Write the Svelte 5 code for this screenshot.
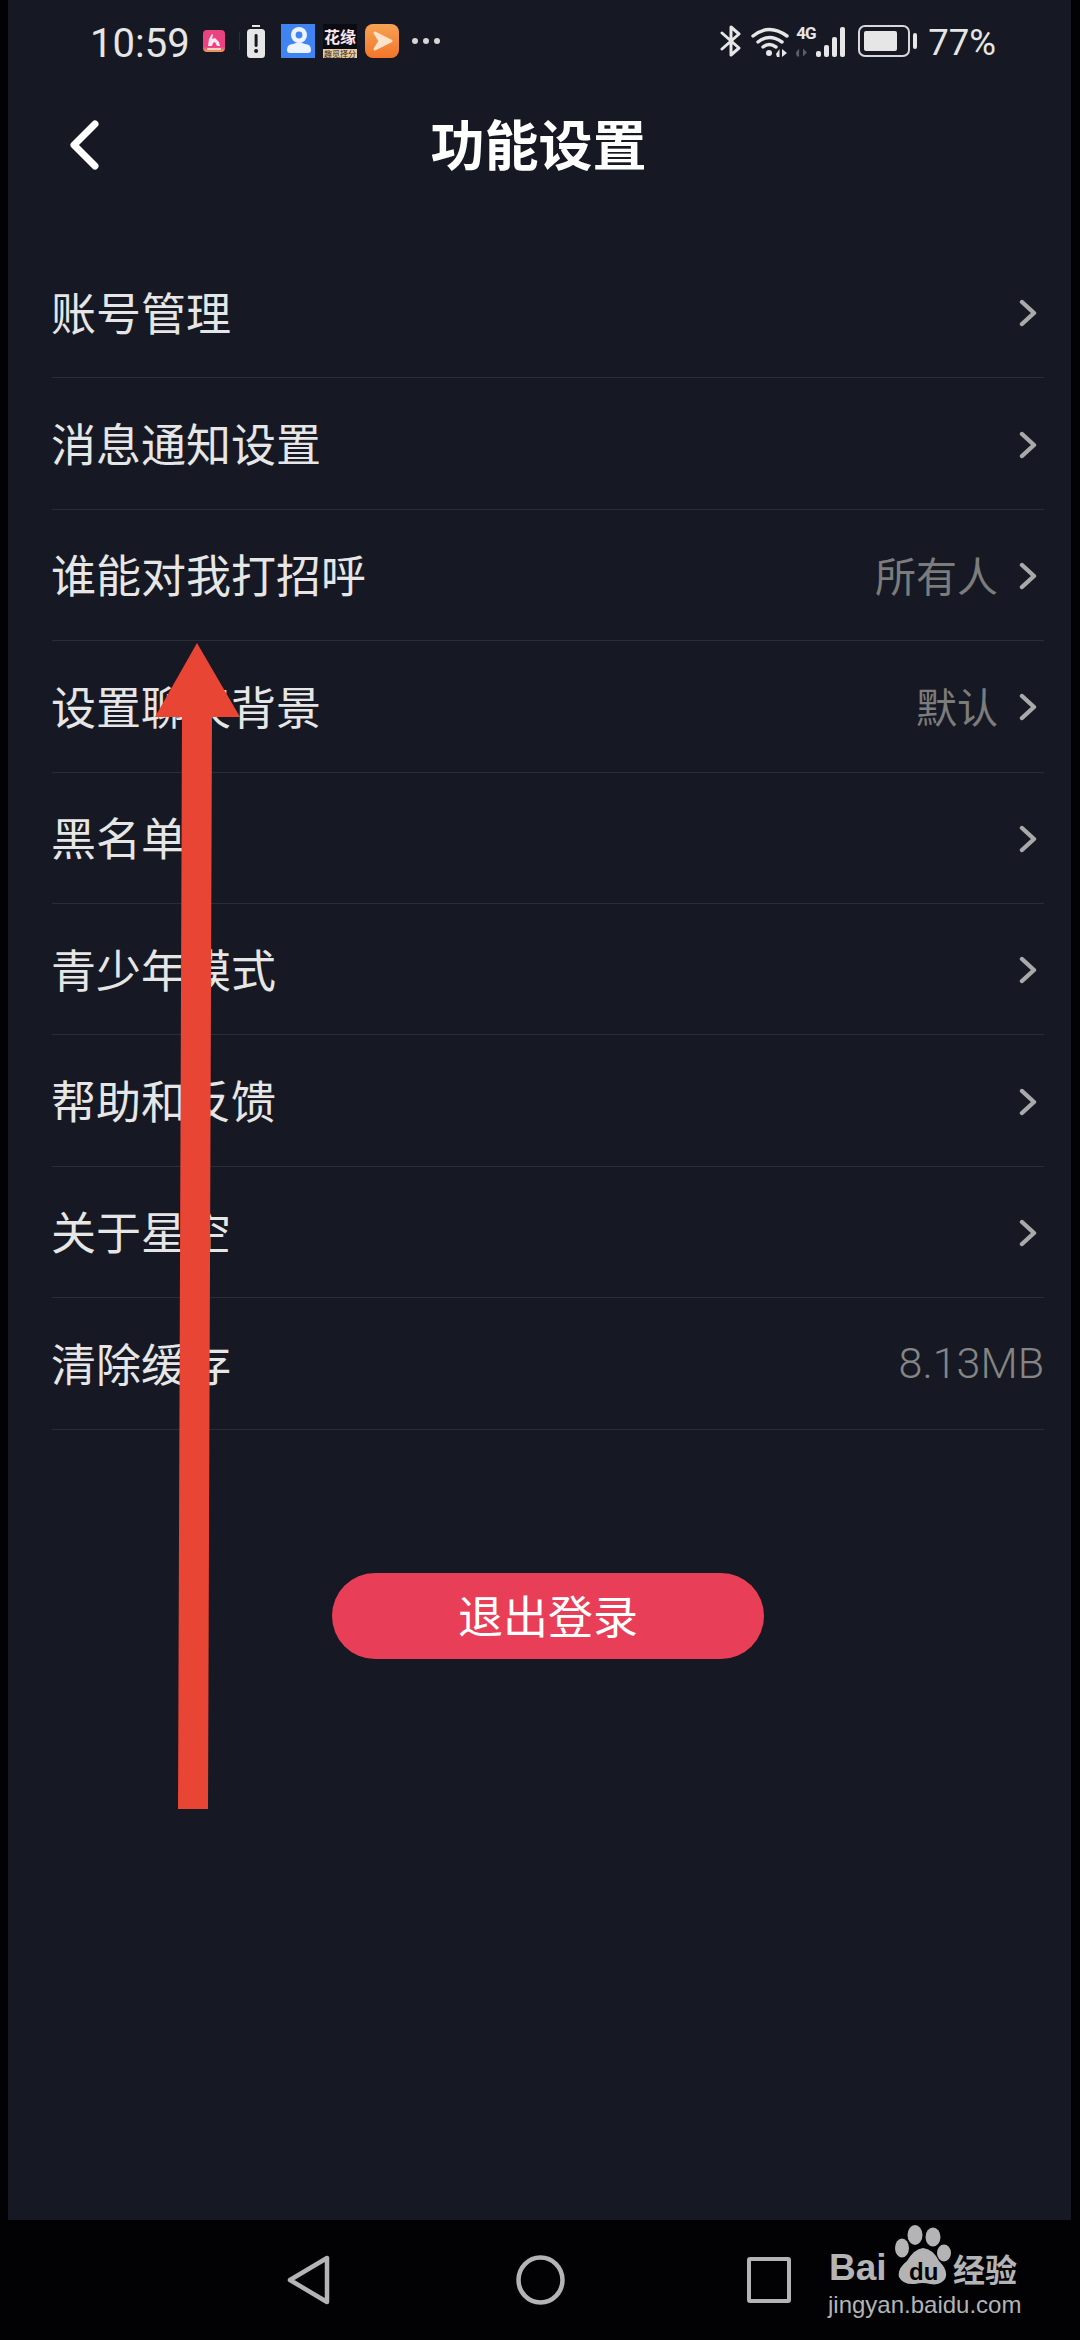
<script>
  const rows = [
    { label: "账号管理", arrow: true },
    { label: "消息通知设置", arrow: true },
    { label: "谁能对我打招呼", value: "所有人", arrow: true },
    { label: "设置聊天背景", value: "默认", arrow: true },
    { label: "黑名单", arrow: true },
    { label: "青少年模式", arrow: true },
    { label: "帮助和反馈", arrow: true },
    { label: "关于星空", arrow: true },
    { label: "清除缓存", value: "8.13MB", arrow: false },
  ];
</script>

<div class="screen">
  <div class="page">
    <div class="status">
      <span class="time">10:59</span>
      <div class="tray">
        <svg class="pink" viewBox="0 0 22 22">
          <defs>
            <linearGradient id="rose" x1="0" y1="0" x2="0" y2="1">
              <stop offset="0" stop-color="#e8447f" />
              <stop offset="0.75" stop-color="#ee3f86" />
              <stop offset="1" stop-color="#f0a05a" />
            </linearGradient>
          </defs>
          <rect width="22" height="22" rx="4" fill="url(#rose)" />
          <path d="M5 16 L6 9 L9 4 L10 5 L9 9 L12 8 L16 12 L17 16 L14 16 L12 12 L10 13 L9 16 Z" fill="#fbe8ee" />
          <rect x="4" y="18" width="14" height="2" fill="#f6d3c2" />
        </svg>
        <div class="sep"></div>
        <svg class="lowbatt" viewBox="0 0 18 33">
          <rect x="5" y="0" width="8" height="2" fill="#e6e6e6" />
          <rect x="0" y="4" width="18" height="29" rx="3.5" fill="#e6e6e6" />
          <rect x="7.6" y="9" width="3" height="13" rx="1.4" fill="#161923" />
          <circle cx="9.1" cy="26" r="2" fill="#161923" />
        </svg>
        <svg class="appicon" viewBox="0 0 34 34">
          <rect width="34" height="34" fill="#3f84f2" />
          <circle cx="18" cy="11" r="8" fill="#eef4fe" />
          <circle cx="18" cy="11" r="3.4" fill="#3f84f2" />
          <path d="M6 26 Q6 20 12 20 Q18 17 24 20 Q30 20 30 26 Q30 29 27 29 H9 Q6 29 6 26 Z" fill="#eef4fe" />
        </svg>
        <div class="huayuan">
          <span class="hy-top">花缘</span>
          <span class="hy-sub">趣觅择分</span>
        </div>
        <svg class="appicon" viewBox="0 0 34 34">
          <defs>
            <linearGradient id="orange" x1="0" y1="0" x2="0" y2="1">
              <stop offset="0" stop-color="#f7a253" />
              <stop offset="1" stop-color="#f2762a" />
            </linearGradient>
          </defs>
          <rect width="34" height="34" rx="8" fill="url(#orange)" />
          <path d="M10 9 L26 17 L10 25 L15 17 Z" fill="#fde3cb" stroke="#fde3cb" stroke-width="3" stroke-linejoin="round" />
        </svg>
        <div class="dots"><i></i><i></i><i></i></div>
      </div>

      <div class="sys">
        <svg class="bt" viewBox="0 0 22 32" fill="none" stroke="#e6e6e6" stroke-width="3" stroke-linejoin="round" stroke-linecap="round">
          <path d="M2 8 L19 23 L11 30 V2 L19 9 L2 24" />
        </svg>
        <svg class="wifi" viewBox="0 0 38 31" fill="none" stroke="#e6e6e6" stroke-width="3.4" stroke-linecap="round">
          <path d="M2 10 Q18 -3 36 10" />
          <path d="M7 16 Q18 7 31 16" />
          <path d="M12 21 Q18 16 25 21" />
          <circle cx="18" cy="27" r="3" fill="#e6e6e6" stroke="none" />
          <path d="M26 31 H28.5 V23 L25 28 Z M31 23 V31 L36 27 Z" fill="#e6e6e6" stroke="none" />
        </svg>
        <div class="cell">
          <div class="net">
            <span class="g4">4G</span>
            <svg class="updown" viewBox="0 0 18 10"><path d="M1 10 H4 V0 L0 5 Z M9 0 V10 L14 5 Z" fill="#5d5f66" /></svg>
          </div>
          <div class="bars"><i class="b1"></i><i class="b2"></i><i class="b3"></i><i class="b4"></i></div>
        </div>
        <div class="battery">
          <div class="shell"><div class="fill"></div></div>
          <div class="nub"></div>
        </div>
        <span class="pct">77%</span>
      </div>
    </div>

    <div class="nav">
      <svg class="back" viewBox="0 0 29 50" fill="none" stroke="#fff" stroke-width="7" stroke-linecap="round" stroke-linejoin="round">
        <path d="M25 4 L4 25 L25 46" />
      </svg>
      <h1>功能设置</h1>
    </div>

    <div class="list">
      {#each rows as row}
        <div class="row">
          <span class="label">{row.label}</span>
          <div class="right">
            {#if row.value}<span class="value" class:num={!row.arrow}>{row.value}</span>{/if}
            {#if row.arrow}
              <svg class="chev" viewBox="0 0 18 28" fill="none" stroke="#a9a9a9" stroke-width="4.4" stroke-linecap="round" stroke-linejoin="round">
                <path d="M3 3 L15 14 L3 25" />
              </svg>
            {/if}
          </div>
        </div>
      {/each}
    </div>

    <button class="logout">退出登录</button>
  </div>

  <div class="navbar">
    <svg class="tri" viewBox="0 0 43 50" fill="none" stroke="#b4b4b4" stroke-width="4.5" stroke-linejoin="round">
      <path d="M40 3 V47 L3 25 Z" />
    </svg>
    <svg class="circle" viewBox="0 0 49 50" fill="none" stroke="#b4b4b4" stroke-width="4.5">
      <ellipse cx="24.5" cy="25" rx="22" ry="22.5" />
    </svg>
    <div class="square"></div>
  </div>

  <svg class="arrow" viewBox="0 0 1080 2340">
    <polygon points="197,643 240,717 212,717 208,1809 178,1809 182,717 155,717" fill="#e94535" />
  </svg>

  <div class="mark">
    <span class="bai">Bai</span>
    <svg class="paw" viewBox="0 0 57 60" fill="#b4b4b4">
      <ellipse cx="20" cy="10" rx="7.5" ry="10" />
      <ellipse cx="38" cy="12" rx="7.5" ry="9.5" />
      <ellipse cx="7" cy="23" rx="7" ry="9.5" />
      <ellipse cx="49" cy="28" rx="7" ry="8.5" />
      <path d="M28 23 Q38 24 44 36 Q54 46 50 54 Q45 61 35 59 Q28 57 20 59 Q8 60 4 52 Q2 44 12 36 Q19 24 28 23 Z" />
    </svg>
    <span class="du">du</span>
    <span class="jy">经验</span>
    <span class="url">jingyan.baidu.com</span>
  </div>
</div>

<style>
  :global(body) {
    margin: 0;
    background: #000;
  }
  .screen {
    position: relative;
    width: 1080px;
    height: 2340px;
    overflow: hidden;
    background: #020205;
    font-family: "Noto Sans CJK SC", "Liberation Sans", sans-serif;
  }
  .page {
    display: flex;
    flex-direction: column;
    margin: 0 9px 0 8px;
    height: 2220px;
    background: #161923;
  }

  /* status bar */
  .status {
    display: flex;
    align-items: center;
    height: 82px;
    padding: 0 0 0 82px;
    color: #e6e6e6;
    font-family: Roboto, "Liberation Sans", sans-serif;
  }
  .time {
    font-size: 40px;
    margin-top: 5px;
    width: 98px;
  }
  .tray {
    display: flex;
    align-items: center;
  }
  .pink {
    width: 22px;
    height: 22px;
    margin-left: 15px;
  }
  .sep {
    width: 1px;
    height: 18px;
    margin-left: 14px;
    background: #2a2d36;
  }
  .lowbatt {
    width: 18px;
    height: 33px;
    margin-left: 7px;
  }
  .appicon {
    width: 34px;
    height: 34px;
    margin-left: 16px;
  }
  .huayuan {
    display: flex;
    flex-direction: column;
    align-items: center;
    justify-content: space-between;
    width: 34px;
    height: 34px;
    margin-left: 8px;
    margin-right: -8px;
    background: #0b0c12;
    font-family: "Noto Sans CJK SC", sans-serif;
    line-height: 1;
    overflow: hidden;
  }
  .hy-top {
    font-size: 16px;
    font-weight: 700;
    color: #fbe6ee;
    margin-top: 4px;
    white-space: nowrap;
  }
  .hy-sub {
    display: block;
    width: 34px;
    height: 9px;
    font-size: 8px;
    line-height: 9px;
    text-align: center;
    white-space: nowrap;
    color: #3a2a1c;
    background: #e9c9a2;
  }
  .dots {
    display: flex;
    gap: 5px;
    margin-left: 13px;
  }
  .dots i {
    width: 6px;
    height: 6px;
    border-radius: 50%;
    background: #d5d5d5;
  }
  .sys {
    display: flex;
    align-items: center;
    margin-left: auto;
    margin-right: 75px;
  }
  .bt {
    width: 22px;
    height: 32px;
  }
  .wifi {
    width: 38px;
    height: 31px;
    margin-left: 9px;
  }
  .cell {
    display: flex;
    align-items: flex-end;
    height: 31px;
    margin-left: 7px;
  }
  .net {
    display: flex;
    flex-direction: column;
    justify-content: space-between;
    width: 18px;
    height: 31px;
  }
  .g4 {
    font-size: 17px;
    font-weight: 700;
    line-height: 15px;
    color: #e6e6e6;
    letter-spacing: -1px;
  }
  .updown {
    width: 14px;
    height: 9px;
  }
  .bars {
    display: flex;
    align-items: flex-end;
    gap: 3px;
    margin-left: 2px;
  }
  .bars i {
    width: 5px;
    background: #e6e6e6;
    border-radius: 2px;
  }
  .b1 { height: 6px; }
  .b2 { height: 12px; }
  .b3 { height: 20px; }
  .b4 { height: 30px; }
  .battery {
    display: flex;
    align-items: center;
    margin-left: 13px;
  }
  .shell {
    box-sizing: border-box;
    width: 52px;
    height: 32px;
    padding: 4px;
    border: 2.5px solid #d8d8d8;
    border-radius: 7px;
  }
  .fill {
    width: 33px;
    height: 100%;
    background: #e6e6e6;
    border-radius: 2px;
  }
  .nub {
    width: 4px;
    height: 16px;
    margin-left: 3px;
    background: #e6e6e6;
    border-radius: 2px;
  }
  .pct {
    font-size: 36.5px;
    margin-left: 11px;
    margin-top: 3px;
  }

  /* title bar */
  .nav {
    position: relative;
    display: flex;
    align-items: center;
    justify-content: center;
    box-sizing: border-box;
    height: 112px;
    padding: 10px 2px 0 0;
  }
  .back {
    position: absolute;
    left: 62px;
    top: 38px;
    width: 29px;
    height: 50px;
  }
  h1 {
    margin: 0;
    font-size: 54px;
    font-weight: 700;
    color: #fff;
    line-height: 1;
  }

  /* settings rows */
  .list {
    display: flex;
    flex-direction: column;
    margin: 53px 27px 0 44px;
  }
  .row {
    box-sizing: border-box;
    display: flex;
    align-items: center;
    justify-content: space-between;
    height: 131.4px;
    border-bottom: 1px solid #2a2d36;
  }
  .label {
    font-size: 45px;
    margin: -2px 0 0 -1px;
    color: #e6e6e6;
  }
  .right {
    display: flex;
    align-items: center;
  }
  .value {
    font-size: 41px;
    margin-top: -2px;
    color: #7c7c7c;
  }
  .num {
    font-family: Roboto, "Liberation Sans", sans-serif;
    font-size: 43px;
    font-weight: 300;
    margin-top: 0;
    color: #858585;
  }
  .chev {
    width: 18px;
    height: 28px;
    margin: 2px 7px 0 21px;
  }
  .logout {
    align-self: flex-start;
    width: 432px;
    height: 86px;
    margin: 143px 0 0 324px;
    padding: 0 0 3px;
    border: none;
    border-radius: 43px;
    background: #e93e58;
    color: #fff;
    font-family: inherit;
    font-size: 45px;
  }

  /* bottom nav */
  .navbar {
    box-sizing: border-box;
    display: flex;
    align-items: flex-start;
    height: 120px;
    padding: 35px 0 0 287px;
  }
  .tri {
    width: 43px;
    height: 50px;
  }
  .circle {
    width: 49px;
    height: 50px;
    margin-left: 186px;
  }
  .square {
    box-sizing: border-box;
    width: 44px;
    height: 46px;
    margin: 2px 0 0 182px;
    border: 4.5px solid #b4b4b4;
    border-radius: 3px;
  }

  /* overlays burned into the shot */
  .arrow {
    position: absolute;
    inset: 0;
    width: 1080px;
    height: 2340px;
  }
  .mark {
    position: absolute;
    left: 0;
    top: 0;
    color: #b4b4b4;
  }
  .bai,
  .paw,
  .du,
  .jy,
  .url {
    position: absolute;
    white-space: nowrap;
  }
  .bai {
    left: 829px;
    top: 2248px;
    font-family: "Liberation Sans", sans-serif;
    font-weight: 700;
    font-size: 37px;
    line-height: 40px;
  }
  .paw {
    left: 895px;
    top: 2225px;
    width: 57px;
    height: 60px;
  }
  .du {
    left: 909px;
    top: 2260px;
    font-family: "Liberation Sans", sans-serif;
    font-weight: 700;
    font-size: 24px;
    line-height: 24px;
    color: #020205;
  }
  .jy {
    left: 953px;
    top: 2248px;
    font-size: 32px;
    line-height: 40px;
    font-weight: 700;
  }
  .url {
    left: 828px;
    top: 2292px;
    font-family: "Liberation Sans", sans-serif;
    font-size: 24px;
    line-height: 26px;
  }
</style>
